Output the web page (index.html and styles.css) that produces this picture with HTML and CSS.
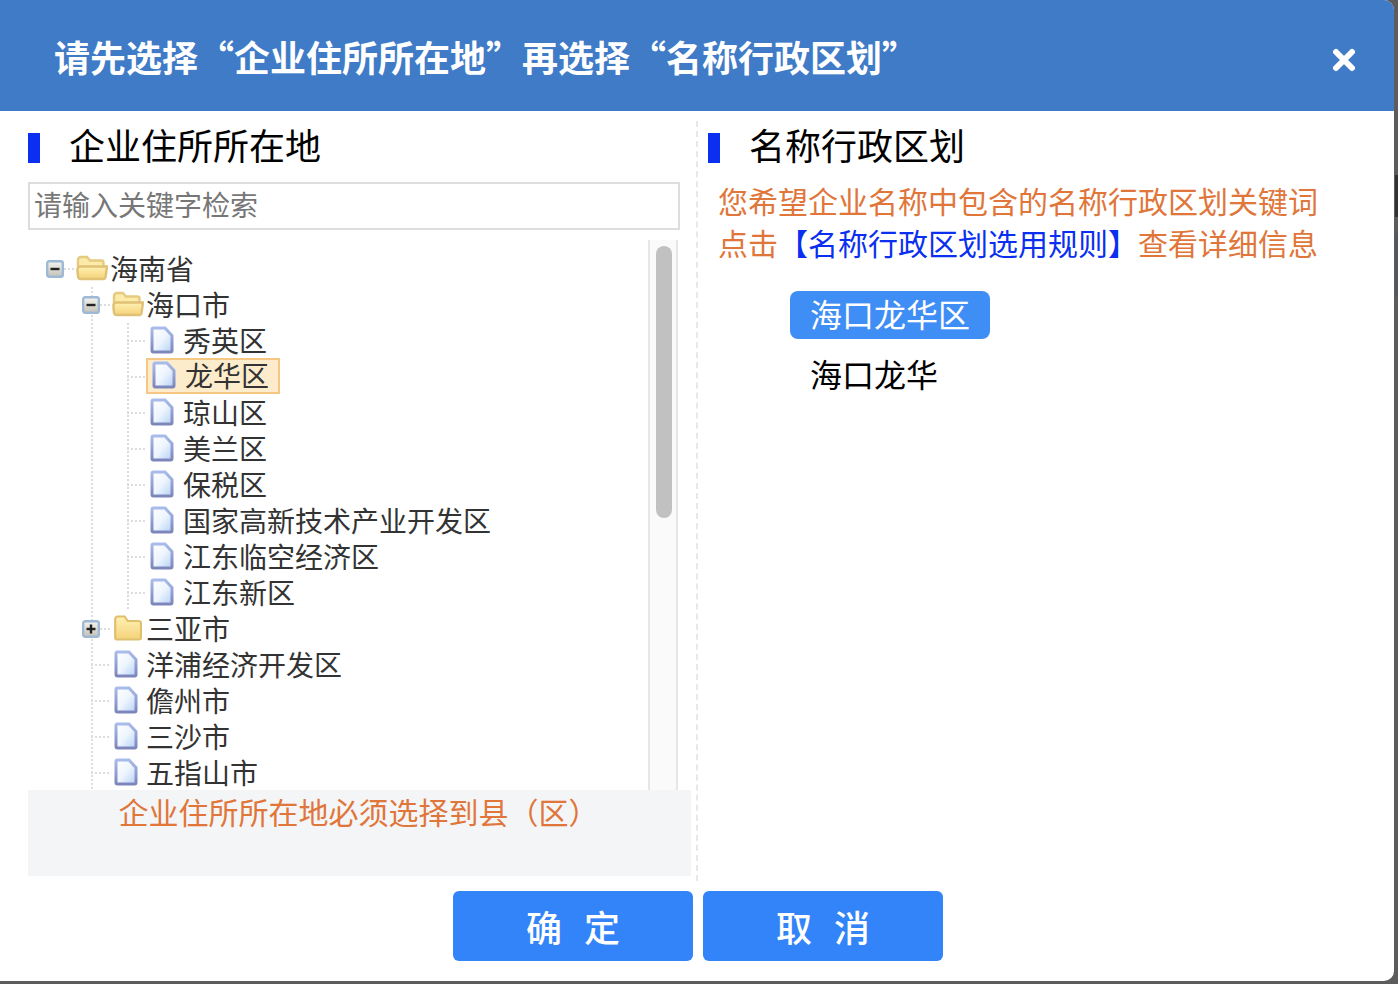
FILE: index.html
```html
<!DOCTYPE html>
<html lang="zh-CN">
<head>
<meta charset="utf-8">
<title>名称行政区划</title>
<link rel="stylesheet" href="styles.css">
</head>
<body>
<svg class="defs" width="0" height="0" aria-hidden="true">
  <defs>
    <linearGradient id="gDoc" x1="0" y1="0" x2="1" y2="1"><stop offset="0" stop-color="#ffffff"/><stop offset=".5" stop-color="#eef5fe"/><stop offset="1" stop-color="#b4d0f6"/></linearGradient>
    <linearGradient id="gDocEdge" x1="0" y1="0" x2="0" y2="1"><stop offset="0" stop-color="#a8bbea"/><stop offset="1" stop-color="#7d86bb"/></linearGradient>
    <linearGradient id="gFold" x1="0" y1="0" x2="0" y2="1"><stop offset="0" stop-color="#fff1b2"/><stop offset="1" stop-color="#f4d27a"/></linearGradient>
    <linearGradient id="gBtn" x1="0" y1="0" x2="0" y2="1"><stop offset="0" stop-color="#f6f4ee"/><stop offset="1" stop-color="#c4c1b8"/></linearGradient>
    <symbol id="doc" viewBox="0 0 24 28">
      <path d="M2 3.500A1.500 1.500 0 0 1 3.500 2H15l7 7.500v15a1.500 1.500 0 0 1-1.500 1.500h-17A1.500 1.500 0 0 1 2 24.500z" fill="url(#gDoc)" stroke="url(#gDocEdge)" stroke-width="3"/>
    </symbol>
    <symbol id="fold-open" viewBox="0 0 32 26">
      <path d="M2 20V5a3 3 0 0 1 3-3h6l3 3.500h11.500a2 2 0 0 1 2 2V13H2z" fill="#fbeaa8" stroke="#e6ca80" stroke-width="2.400"/>
      <path d="M1.500 15a3 3 0 0 1 3-3.500H31l-1.500 11a2 2 0 0 1-2 1.500H5a3 3 0 0 1-3-2.500z" fill="url(#gFold)" stroke="#e0c176" stroke-width="2.400"/>
    </symbol>
    <symbol id="fold" viewBox="0 0 28 26">
      <path d="M1.200 22.500V4a2.500 2.500 0 0 1 2.500-2.500h7l3 4.500h10.800a2.500 2.500 0 0 1 2.500 2.500v14a2 2 0 0 1-2 2H3.200a2 2 0 0 1-2-2z" fill="url(#gFold)" stroke="#e0bf6d" stroke-width="2.200"/>
    </symbol>
    <symbol id="minus" viewBox="0 0 18 18">
      <rect x="1.200" y="1.200" width="15.600" height="15.600" rx="2" fill="url(#gBtn)" stroke="#9db9d6" stroke-width="2.400"/>
      <rect x="4.500" y="7.800" width="9" height="2.400" fill="#222"/>
    </symbol>
    <symbol id="plus" viewBox="0 0 18 18">
      <rect x="1.200" y="1.200" width="15.600" height="15.600" rx="2" fill="url(#gBtn)" stroke="#9db9d6" stroke-width="2.400"/>
      <rect x="4.500" y="7.800" width="9" height="2.400" fill="#222"/>
      <rect x="7.800" y="4.500" width="2.400" height="9" fill="#222"/>
    </symbol>
  </defs>
</svg>

<div class="modal">
  <header class="head">
    <h1 class="head-title">请先选择“企业住所所在地”再选择“名称行政区划”</h1>
    <svg class="close" width="24" height="24" viewBox="0 0 24 24" aria-label="关闭"><path d="M4 4 20 20M20 4 4 20" stroke="#fff" stroke-width="6" stroke-linecap="round"/></svg>
  </header>

  <div class="body">
    <section class="left">
      <h2 class="sec-title"><i class="mark"></i><span class="sec-text">企业住所所在地</span></h2>
      <input class="search" type="text" placeholder="请输入关键字检索">
      <div class="tree-wrap">
        <div class="tree">
          <div class="row">
            <svg class="sw"><use href="#minus"/></svg><i class="dash-s"></i>
            <svg class="ic-fo"><use href="#fold-open"/></svg><span class="lb">海南省</span>
          </div>
          <div class="l1">
            <div class="row">
              <svg class="sw"><use href="#minus"/></svg><i class="dash-s"></i>
              <svg class="ic-fo"><use href="#fold-open"/></svg><span class="lb">海口市</span>
            </div>
            <div class="l2">
              <div class="row"><i class="dash"></i><svg class="ic-d"><use href="#doc"/></svg><span class="lb">秀英区</span></div>
              <div class="row"><i class="dash"></i><span class="sel"><svg class="ic-d"><use href="#doc"/></svg><span class="lb">龙华区</span></span></div>
              <div class="row"><i class="dash"></i><svg class="ic-d"><use href="#doc"/></svg><span class="lb">琼山区</span></div>
              <div class="row"><i class="dash"></i><svg class="ic-d"><use href="#doc"/></svg><span class="lb">美兰区</span></div>
              <div class="row"><i class="dash"></i><svg class="ic-d"><use href="#doc"/></svg><span class="lb">保税区</span></div>
              <div class="row"><i class="dash"></i><svg class="ic-d"><use href="#doc"/></svg><span class="lb">国家高新技术产业开发区</span></div>
              <div class="row"><i class="dash"></i><svg class="ic-d"><use href="#doc"/></svg><span class="lb">江东临空经济区</span></div>
              <div class="row"><i class="dash"></i><svg class="ic-d"><use href="#doc"/></svg><span class="lb">江东新区</span></div>
            </div>
            <div class="row">
              <svg class="sw"><use href="#plus"/></svg><i class="dash-s"></i>
              <svg class="ic-f"><use href="#fold"/></svg><span class="lb">三亚市</span>
            </div>
            <div class="row"><i class="dash"></i><svg class="ic-d"><use href="#doc"/></svg><span class="lb lb-mid">洋浦经济开发区</span></div>
            <div class="row"><i class="dash"></i><svg class="ic-d"><use href="#doc"/></svg><span class="lb lb-mid">儋州市</span></div>
            <div class="row"><i class="dash"></i><svg class="ic-d"><use href="#doc"/></svg><span class="lb lb-mid">三沙市</span></div>
            <div class="row"><i class="dash"></i><svg class="ic-d"><use href="#doc"/></svg><span class="lb lb-mid">五指山市</span></div>
          </div>
        </div>
        <div class="scroll"><div class="thumb"></div></div>
      </div>
      <p class="note">企业住所所在地必须选择到县（区）</p>
    </section>

    <section class="right">
      <h2 class="sec-title"><i class="mark"></i><span class="sec-text">名称行政区划</span></h2>
      <div class="right-main">
        <p class="desc">您希望企业名称中包含的名称行政区划关键词<br>点击<a class="rule">【名称行政区划选用规则】</a>查看详细信息</p>
        <div class="opts">
          <span class="opt opt-on">海口龙华区</span>
          <span class="opt">海口龙华</span>
        </div>
      </div>
    </section>
  </div>

  <footer class="foot">
    <button class="btn" type="button">确 定</button>
    <button class="btn" type="button">取 消</button>
  </footer>
</div>
</body>
</html>
```

FILE: styles.css
```css
* { box-sizing: border-box; }
html, body { margin: 0; height: 100%; }
body {
  background:
    linear-gradient(#333, #333) 1395px 175px / 3px 42px no-repeat,
    linear-gradient(#53585f, #53585f) 1395px 233px / 3px 64px no-repeat,
    #5c5c5c;
  overflow: hidden;
  font-family: "Noto Sans CJK SC", "Liberation Sans", sans-serif;
}
.defs { display: block; height: 0; }

.modal {
  width: 1394px;
  height: 981px;
  background: #fff;
  border-radius: 0 10px 10px 0;
  overflow: hidden;
}

.head {
  height: 111px;
  background: #3f7bc6;
  display: flex;
  align-items: center;
  justify-content: space-between;
  padding: 0 38px 0 54px;
  color: #fff;
}
.head-title {
  margin: 0;
  font-size: 36px;
  font-weight: 700;
  line-height: 48px;
  white-space: nowrap;
}
.close { margin-top: 8px; }

.body { display: flex; height: 770px; }

.left { width: 692px; padding: 16px 0 0 28px; display: flex; flex-direction: column; }
.right {
  flex: 1;
  margin: 10px 0 0 4px;
  border-left: 2px dashed #e8e8e8;
  padding: 6px 0 0 10px;
}

.sec-title {
  margin: 0;
  height: 40px;
  display: flex;
  align-items: center;
  font-size: 36px;
  font-weight: 400;
  line-height: 40px;
  color: #000;
}
.mark { width: 12px; height: 30px; background: #0a2ff0; margin-top: 2px; flex: none; }
.sec-text { margin: -6px 0 0 29px; }

.search {
  display: block;
  width: 652px;
  height: 48px;
  margin-top: 15px;
  border: 2px solid #ddd;
  padding: 0 5px 4px 4px;
  font: 28px/40px "Noto Sans CJK SC", sans-serif;
  color: #777;
  outline: 0;
}
.search::placeholder { color: #777; opacity: 1; }

.tree-wrap { display: flex; height: 550px; margin-top: 10px; overflow: hidden; }
.tree { width: 620px; padding: 11px 0 0 18px; flex: none; overflow: hidden; }
.scroll {
  width: 30px;
  height: 100%;
  background: #fafafa;
  border-left: 2px solid #e6e6e6;
  border-right: 2px solid #e6e6e6;
  padding: 6px 6px 0;
  flex: none;
}
.thumb { width: 16px; height: 272px; background: #c1c1c1; border-radius: 8px; }

.row {
  display: flex;
  align-items: center;
  height: 36px;
  font-size: 28px;
  color: #333;
  white-space: nowrap;
}
.lb { line-height: 36px; margin-top: -2px; }
.sw { width: 18px; height: 18px; flex: none; filter: blur(.3px); }
.dash-s {
  width: 12px;
  height: 2px;
  flex: none;
  background: repeating-linear-gradient(90deg, #ddd 0 2px, transparent 2px 4px);
}
.ic-fo { width: 32px; height: 26px; flex: none; margin: -2px 2px 0 0; filter: blur(.5px); }
.ic-f { width: 28px; height: 26px; flex: none; margin: -2px 4px 0 2px; filter: blur(.4px); }
.ic-d { width: 24px; height: 28px; flex: none; margin: -2px 9px 0 0; filter: blur(.5px); }
.lb-mid { margin-left: -1px; }

.l1, .l2 {
  padding-left: 36px;
  background-image: linear-gradient(#ddd 50%, transparent 50%);
  background-size: 2px 4px;
  background-repeat: repeat-y;
  background-position: 45px 0;
}
.dash {
  width: 18px;
  height: 2px;
  flex: none;
  margin: 0 5px 0 9px;
  background: repeating-linear-gradient(90deg, #ddd 0 2px, transparent 2px 4px);
}
.sel {
  display: inline-flex;
  align-items: center;
  height: 36px;
  width: 134px;
  margin: -2px 0 0 -4px;
  padding-left: 4px;
  background: #fdeccb;
  border: 2px solid #f6c684;
  color: #333;
}

.note {
  margin: 0;
  width: 663px;
  height: 86px;
  padding-right: 2px;
  background: #f4f5f7;
  color: #e0763a;
  font-size: 30px;
  line-height: 42px;
  text-align: center;
}

.right-main { padding-left: 10px; }
.desc {
  margin: 12px 0 0;
  font-size: 30px;
  line-height: 42px;
  color: #e0763a;
  white-space: nowrap;
}
.rule { color: #0a2ff0; }

.opts { display: flex; flex-direction: column; align-items: flex-start; margin: 28px 0 0 72px; }
.opt {
  width: 200px;
  height: 48px;
  padding-left: 20px;
  font-size: 32px;
  line-height: 44px;
  color: #000;
  white-space: nowrap;
}
.opt-on { background: #3f8ef5; color: #fff; border-radius: 8px; margin-bottom: 12px; }

.foot { display: flex; justify-content: center; gap: 10px; padding: 10px 0 0 2px; }
.btn {
  width: 240px;
  height: 70px;
  border: 0;
  border-radius: 6px;
  background: #3384f8;
  color: #fff;
  font: 500 36px/70px "Noto Sans CJK SC", sans-serif;
  word-spacing: 14px;
  padding: 0;
}
```
